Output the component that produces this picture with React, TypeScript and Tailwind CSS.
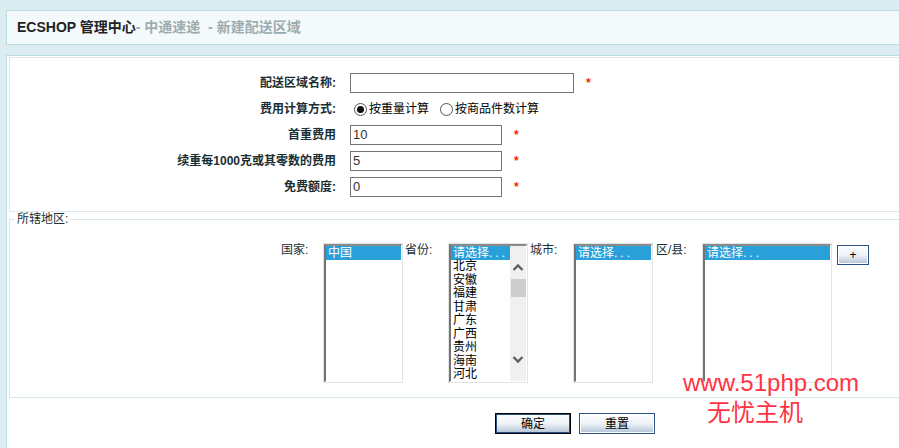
import React from "react";

function Radio({ checked }: { checked?: boolean }) {
  return (
    <span className="inline-flex w-[13px] h-[13px] rounded-full border border-[#555] bg-white items-center justify-center shrink-0">
      {checked && <span className="w-[7px] h-[7px] rounded-full bg-[#111]" />}
    </span>
  );
}

function Placeholder() {
  return (
    <>
      请选择<span className="tracking-[3px]">...</span>
    </>
  );
}

function ListBox({
  width,
  items,
  scroll,
}: {
  width: string;
  items: React.ReactNode[];
  scroll?: boolean;
}) {
  return (
    <div className={`${width} h-[140px] border border-[#e3e3e3] shrink-0`}>
      <div className="w-full h-full border-t-2 border-l-2 border-r border-b border-t-[#8a8a8a] border-l-[#747474] border-r-white border-b-white bg-white flex overflow-hidden">
        <div className="flex-1 min-w-0 overflow-hidden text-black">
          {items.map((it, i) =>
            i === 0 ? (
              <div
                key={i}
                className="h-[14px] leading-[14px] bg-[#29a0da] text-white pl-[2px] whitespace-nowrap overflow-hidden"
              >
                {it}
              </div>
            ) : (
              <div key={i} className="h-[13.5px] leading-[13.5px] pl-[2px] whitespace-nowrap">
                {it}
              </div>
            )
          )}
        </div>
        {scroll && (
          <div className="w-[16px] h-full bg-[#f0f0f0] flex flex-col items-center shrink-0">
            <svg className="mt-[17px]" width="12" height="9" viewBox="0 0 12 9">
              <path d="M1.5 7 L6 2.5 L10.5 7" stroke="#606060" strokeWidth="2.4" fill="none" />
            </svg>
            <div className="mt-[7px] w-[15px] h-[18px] bg-[#cdcdcd]" />
            <div className="flex-1" />
            <svg width="12" height="9" viewBox="0 0 12 9">
              <path d="M1.5 2 L6 6.5 L10.5 2" stroke="#606060" strokeWidth="2.4" fill="none" />
            </svg>
            <div className="h-[17px]" />
          </div>
        )}
      </div>
    </div>
  );
}

function Star({ ml }: { ml: string }) {
  return <span className={`${ml} text-[#ff2200] font-bold text-[12px]`}>*</span>;
}

export default function App() {
  const provinces: React.ReactNode[] = [
    <Placeholder key="p" />,
    "北京",
    "安徽",
    "福建",
    "甘肃",
    "广东",
    "广西",
    "贵州",
    "海南",
    "河北",
  ];
  return (
    <div className="relative w-[899px] h-[448px] overflow-hidden bg-[#dcedf1] pt-[10px] pl-[6px] font-['Liberation_Sans','Noto_Sans_CJK_SC',sans-serif] text-[12px] text-[#192e32]">
      {/* header */}
      <div className="h-[35px] border border-r-0 border-[#bbdde5] bg-[#f4fafb] flex items-center pl-[10px] text-[14px] font-bold whitespace-nowrap">
        <span className="text-[#222]">ECSHOP 管理中心</span>
        <span className="text-[#9cacaf]">- 中通速递&nbsp; - 新建配送区域</span>
      </div>

      {/* main */}
      <div className="mt-[10px] h-[400px] border-t border-l border-[#bbdde5] bg-white pt-[1px] pl-[2px]">
        {/* form box */}
        <div className="border-t border-b border-l border-[#dce9ee] pt-[12px] pb-[11px]">
          <div className="h-[26px] flex items-center">
            <div className="w-[326px] text-right font-bold">配送区域名称:</div>
            <div className="ml-[14px] w-[224px] h-[20px] border border-[#767676] bg-white" />
            <Star ml="ml-[12px]" />
          </div>
          <div className="h-[26px] flex items-center">
            <div className="w-[326px] text-right font-bold">费用计算方式:</div>
            <div className="ml-[18px] flex items-center text-black">
              <Radio checked />
              <span className="ml-[2px]">按重量计算</span>
              <span className="ml-[11px] flex items-center">
                <Radio />
              </span>
              <span className="ml-[2px]">按商品件数计算</span>
            </div>
          </div>
          {[
            ["首重费用", "10"],
            ["续重每1000克或其零数的费用", "5"],
            ["免费额度:", "0"],
          ].map(([label, val]) => (
            <div key={label} className="h-[26px] flex items-center">
              <div className="w-[326px] text-right font-bold">{label}</div>
              <div className="ml-[14px] w-[152px] h-[20px] border border-[#767676] bg-white pl-[2px] text-[13px] leading-[18px] text-[#333]">
                {val}
              </div>
              <Star ml="ml-[12px]" />
            </div>
          ))}
        </div>

        {/* region fieldset */}
        <fieldset className="border border-r-0 border-[#d7e6eb]">
          <legend className="ml-[5px] px-[2px] leading-[14px] text-[12px]">所辖地区:</legend>
          <div className="pt-[17px] pb-[14px] pl-[271px] flex items-start whitespace-nowrap">
            <div className="w-[42px] leading-[14px]">国家:</div>
            <ListBox width="w-[80px]" items={["中国"]} />
            <div className="ml-[2px] w-[43px] leading-[14px]">省份:</div>
            <ListBox width="w-[80px]" items={provinces} scroll />
            <div className="ml-[2px] w-[43px] leading-[14px]">城市:</div>
            <ListBox width="w-[80px]" items={[<Placeholder key="c" />]} />
            <div className="ml-[3px] w-[46px] leading-[14px]">区/县:</div>
            <ListBox width="w-[130px]" items={[<Placeholder key="d" />]} />
            <button className="ml-[5px] mt-[2px] w-[32px] h-[20px] border border-[#2d5185] shadow-[inset_0_0_0_1px_#fff] bg-linear-to-b from-[#fdfeff] via-[#eef3f8] to-[#b3c3d7] text-black text-[12px] leading-[16px] flex items-center justify-center">
              +
            </button>
          </div>
        </fieldset>

        {/* buttons */}
        <div className="mt-[15px] pl-[486px] flex gap-[8px]">
          <button className="w-[76px] h-[21px] border border-black shadow-[inset_0_0_0_1px_#2d5185] bg-linear-to-b from-[#fdfeff] via-[#eef3f8] to-[#b3c3d7] text-black text-[12px] flex items-center justify-center">
            确定
          </button>
          <button className="w-[76px] h-[21px] border border-[#2d5185] shadow-[inset_0_0_0_1px_#fff] bg-linear-to-b from-[#fdfeff] via-[#eef3f8] to-[#b3c3d7] text-black text-[12px] flex items-center justify-center">
            重置
          </button>
        </div>
      </div>

      {/* watermark */}
      <div className="absolute left-[683px] top-[371px] text-[24px] leading-[24px] text-[#ff3344] font-['Liberation_Sans',sans-serif] whitespace-nowrap">
        www.51php.com
      </div>
      <div className="absolute left-[707px] top-[399px] text-[24px] leading-[24px] text-[#ff3344] font-['Noto_Sans_CJK_SC',sans-serif] whitespace-nowrap">
        无忧主机
      </div>
    </div>
  );
}
